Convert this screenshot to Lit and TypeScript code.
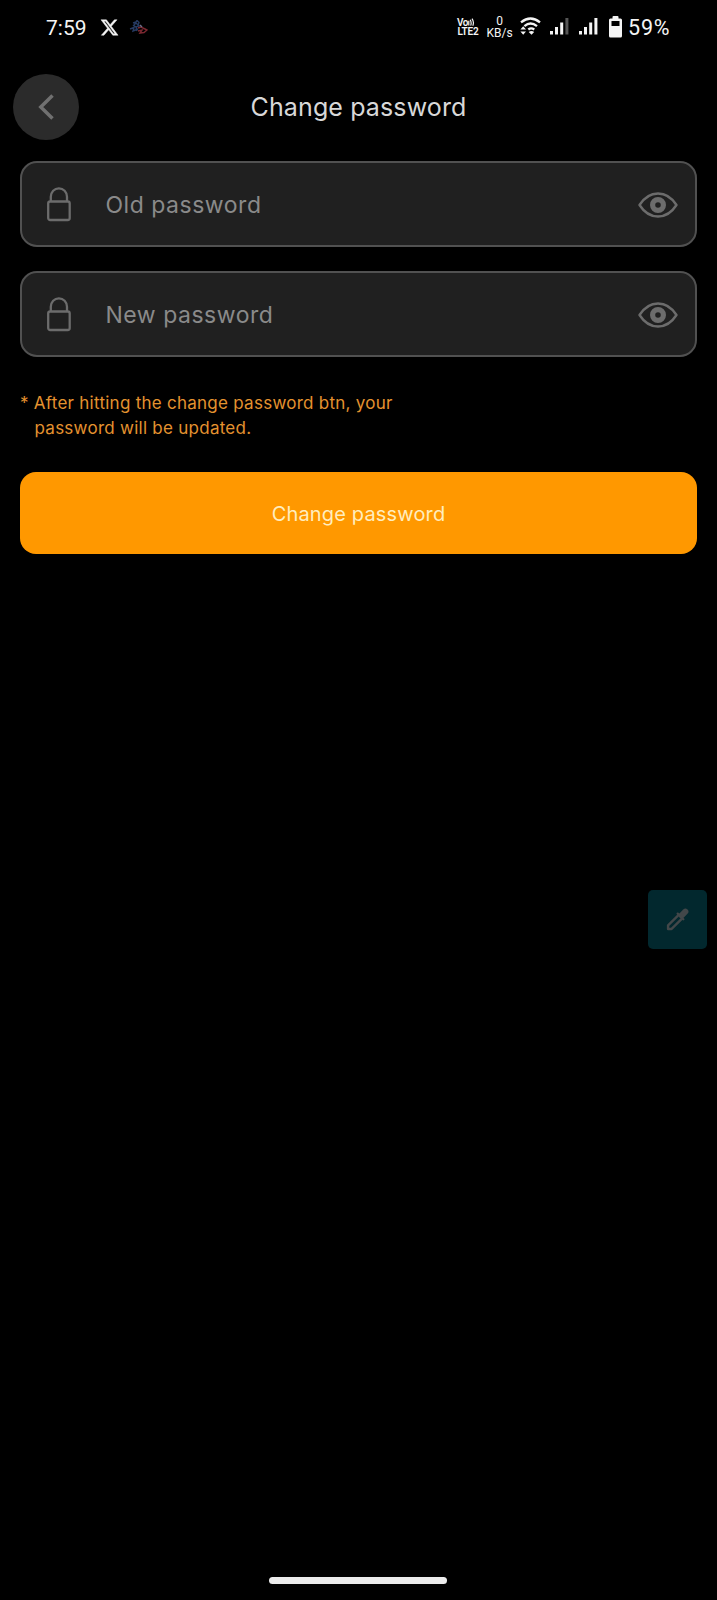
import { LitElement, html, css, svg } from "lit";
import { customElement, property } from "lit/decorators.js";

@customElement("status-bar")
class StatusBar extends LitElement {
  static styles = css`
    :host { display: flex; height: 54px; box-sizing: border-box; padding: 0 44px 0 46px; align-items: center; justify-content: space-between; color: #f4f4f4; font-family: Roboto, sans-serif; }
    .group { display: flex; align-items: center; }
    .time { font-size: 21px; line-height: 24px; width: 54px; padding-top: 1px; }
    .x { width: 19px; margin-right: 10px; }
    svg { display: block; flex: none; }
    .lte, .speed { display: flex; flex-direction: column; align-items: center; white-space: nowrap; }
    .lte { width: 22px; margin: 0 7px 0 -1px; font: 600 10px/9px Roboto, sans-serif; }
    .vo { letter-spacing: -0.5px; align-self: flex-start; display: flex; }
    .l2 { letter-spacing: -0.2px; }
    .speed { width: 27px; margin: -1px 8px 0 0; font: 400 12px/12px Roboto, sans-serif; }
    .wifi { margin: 0 9px 2px -1px; }
    .sim { margin: 0 10px 2px 0; }
    .sim.second { margin-right: 11px; }
    .percent { font-size: 21.500px; line-height: 24px; width: 45px; margin-left: 6px; padding-top: 1px; letter-spacing: 0.8px; }
  `;
  bars(last: string) {
    return svg`<rect x="0" y="13" width="3" height="3.500"/><rect x="5" y="9" width="3" height="7.500"/><rect x="10.200" y="4.500" width="3" height="12"/><rect x="15.400" y="0" width="3" height="16.500" fill=${last}/>`;
  }
  render() {
    return html`
      <div class="group">
        <div class="time">7:59</div>
        <svg class="x" width="19" height="19" viewBox="0 0 24 24" fill="#f4f4f4" stroke="#f4f4f4" stroke-width=".6"><path d="M18.240 2.250h3.310l-7.230 8.260 8.500 11.240h-6.660l-5.210-6.820-5.970 6.820H1.680l7.730-8.840L1.250 2.250h6.830l4.710 6.230zm-1.160 17.520h1.830L7.080 4.130H5.120z"/></svg>
        <svg width="19" height="14" viewBox="0 0 19 14" fill="none" stroke-width="1.400">
          <path d="M4 3l3-1 1-1.500 2 2-1 3M4 6l3-3 3 3-3 1-2-1M1 9l4-1.500-1 3.500 5-2M7 7l1 4" stroke="#263a62"/>
          <path d="M9 8l3-1 4 2 2 1-3 2.500-4 .5 2-3-4 1" stroke="#7a2730"/><path d="M11 5l2 2" stroke="#6d6f8a"/>
        </svg>
      </div>
      <div class="group">
        <div class="lte"><span class="vo">Vo<svg width="7" height="9" viewBox="0 0 7 9" fill="none" stroke="#f4f4f4" stroke-width="1.200"><path d="M.8 2.800v4.600M2.200 1.800q1.600 2.800.5 5.800M4 .7q2.400 3.400.8 7"/></svg></span><span class="l2">LTE2</span></div>
        <div class="speed"><span>0</span><span>KB/s</span></div>
        <svg class="wifi" width="21" height="19" viewBox="0 0 21 19" fill="none" stroke="#f4f4f4" stroke-width="2.300">
          <path d="M1 5.300Q10.500-2.400 20 5.300M4.400 9.200Q10.500 3.800 17 9.200M8.300 12.500q2.800-2.200 6 0"/>
          <path d="M8.700 15q2.800-2 5.500 0l-2.700 2.800z" fill="#f4f4f4" stroke="none"/>
          <path d="M.4 12.600L3.200 9.200 6 12.600zM.4 14.400H6l-2.800 3.400z" fill="#f4f4f4" stroke="none"/>
        </svg>
        <svg class="sim" width="19" height="17" viewBox="0 0 19 17" fill="#f4f4f4">${this.bars("#555")}</svg>
        <svg class="sim second" width="19" height="17" viewBox="0 0 19 17" fill="#f4f4f4">${this.bars("#f4f4f4")}</svg>
        <svg width="13" height="22" viewBox="0 0 13 22"><path d="M3.500 2.500V1q0-1 1-1h4q1 0 1 1v1.500h2q1.500 0 1.500 1.500v16q0 1.500-1.500 1.500h-10Q0 21.500 0 20V4q0-1.500 1.500-1.500z" fill="#f4f4f4"/><path d="M2.500 5h8v5h-8z" fill="#000"/></svg>
        <div class="percent">59%</div>
      </div>`;
  }
}

@customElement("password-field")
class PasswordField extends LitElement {
  @property() label = "";
  static styles = css`
    :host { display: flex; align-items: center; height: 86px; box-sizing: border-box; border: 2px solid #515151; border-radius: 17px; background: #202020; padding: 0 17px 0 25px; }
    svg { display: block; flex: none; }
    .label { flex: 1; margin-left: 33.5px; padding-top: 2px; color: #8a8a8a; font: 400 23px/30px Inter, sans-serif; letter-spacing: 0.52px; }
    .eye { margin-top: 1px; }
  `;
  render() {
    return html`
      <svg width="25" height="36" viewBox="0 0 25 36" fill="none" stroke="#6c6c6c" stroke-width="2.300"><rect x="1.200" y="15.500" width="21.500" height="18.500" rx="2"/><path d="M3.800 15.500V10.800a8.100 8.500 0 0 1 16.200 0V15.500"/></svg>
      <div class="label">${this.label}</div>
      <svg class="eye" width="40" height="26" viewBox="0 0 40 26" fill="none" stroke="#6c6c6c"><path d="M1.500 13C6 6 12 1.500 20 1.500S34 6 38.500 13C34 20 28 24.500 20 24.500S6 20 1.500 13z" stroke-width="2.400" stroke-linejoin="round"/><circle cx="20" cy="13" r="5.400" stroke-width="5.200"/></svg>`;
  }
}

@customElement("app-root")
class AppRoot extends LitElement {
  static styles = css`
    :host { display: flex; flex-direction: column; position: relative; height: 1600px; background: #000; font-family: Inter, sans-serif; overflow: hidden; }
    .header { display: grid; grid-template-columns: 66px 1fr 66px; align-items: center; padding: 0 13px; margin-top: 20px; height: 66px; }
    .back { width: 66px; height: 66px; border-radius: 50%; background: #2b2b2b; display: grid; place-items: center; }
    .title { text-align: center; color: #d8d8d8; font-weight: 400; font-size: 25px; line-height: 32px; letter-spacing: 0.12px; }
    .form { display: flex; flex-direction: column; gap: 24px; padding: 21px 20px 0; }
    .note { margin-top: 10px; color: #e4922f; font-weight: 400; font-size: 17px; line-height: 24.5px; letter-spacing: 0.26px; white-space: pre; }
    .second { padding-left: 14.5px; }
    .submit { margin-top: 8px; height: 82px; border: 0; border-radius: 16px; background: #ff9800; color: #ffedbe; font: 400 20px/26px Inter, sans-serif; letter-spacing: 0.16px; padding: 2px 0 0; }
    .picker { position: absolute; right: 10px; top: 890px; width: 59px; height: 59px; border-radius: 5px; background: #02282e; display: grid; place-items: center; }
    .home { width: 178px; height: 7px; border-radius: 4px; background: #ececec; margin: auto auto 16px 269px; }
  `;
  render() {
    return html`
      <status-bar></status-bar>
      <div class="header">
        <div class="back"><svg width="16" height="26" viewBox="0 0 16 26" fill="none" stroke="#707070" stroke-width="3.500"><path d="M14.500 1.500L2.800 13l11.700 11.500"/></svg></div>
        <div class="title">Change password</div>
      </div>
      <div class="form">
        <password-field label="Old password"></password-field>
        <password-field label="New password"></password-field>
        <div class="note"><div>* After hitting the change password btn, your</div><div class="second">password will be updated.</div></div>
        <button class="submit">Change password</button>
      </div>
      <div class="picker"><svg width="29" height="29" viewBox="0 0 24 24" fill="none" stroke="#424749" stroke-width="2" stroke-linejoin="round"><path d="M12.800 8.300L4.200 16.900V19.800H7.100L15.700 11.200"/><path d="M12.200 7.200l4.600 4.600M15.800 8.200L19 5" stroke-linecap="round"/><path d="M15.500 8.500l3-3" stroke-width="5" stroke-linecap="round"/></svg></div>
      <div class="home"></div>`;
  }
}
